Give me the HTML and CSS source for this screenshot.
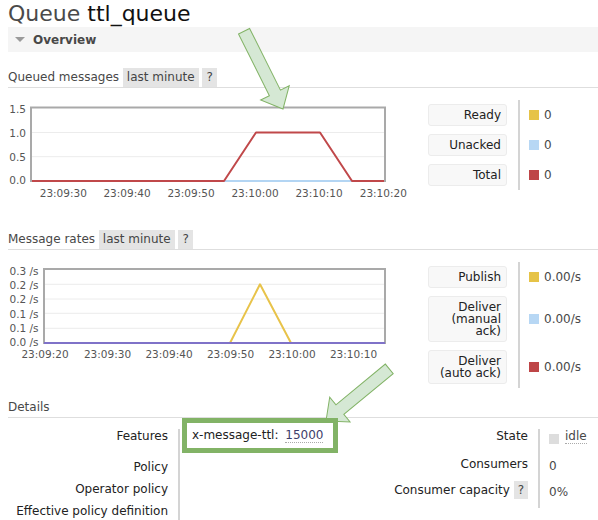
FILE: index.html
```html
<!DOCTYPE html>
<html>
<head>
<meta charset="utf-8">
<title>Queue ttl_queue</title>
<link rel="stylesheet" href="styles.css">
</head>
<body>
<h1 class="title"><span class="title-kind">Queue</span> <span class="title-name">ttl_queue</span></h1>

<div class="section-head"><span class="tri"></span><span class="section-label">Overview</span></div>

<h3 class="sub">Queued messages <span class="pill">last minute</span> <span class="pill">?</span></h3>
<div class="chart-row chart-row-1">
  <svg class="chart" width="412" height="100" viewBox="0 0 412 100">
    <line x1="24" y1="32.5" x2="376" y2="32.5" stroke="#ececec" stroke-width="1"/>
    <line x1="24" y1="56.7" x2="376" y2="56.7" stroke="#ececec" stroke-width="1"/>
    <rect x="23" y="7.5" width="354" height="73.5" fill="none" stroke="#a9a9a9" stroke-width="2"/>
    <polyline points="216,81 344,81" fill="none" stroke="#b3d5f3" stroke-width="2"/>
    <polyline points="24,81 216,81 248,32.5 312,32.5 344,81 376,81" fill="none" stroke="#c0484a" stroke-width="2" stroke-linejoin="round"/>
    <g class="ax" text-anchor="end">
      <text x="18" y="12.8">1.5</text>
      <text x="18" y="36.5">1.0</text>
      <text x="18" y="60.5">0.5</text>
      <text x="18" y="84.3">0.0</text>
    </g>
    <g class="ax" text-anchor="middle">
      <text x="55.3" y="96.5">23:09:30</text>
      <text x="119" y="96.5">23:09:40</text>
      <text x="183" y="96.5">23:09:50</text>
      <text x="247" y="96.5">23:10:00</text>
      <text x="311" y="96.5">23:10:10</text>
      <text x="375.3" y="96.5">23:10:20</text>
    </g>
  </svg>
  <div class="legend">
    <div class="lg-label"><span class="lg-box">Ready</span></div>
    <div class="lg-value"><span class="sw sw-yellow"></span>0</div>
    <div class="lg-label"><span class="lg-box">Unacked</span></div>
    <div class="lg-value"><span class="sw sw-blue"></span>0</div>
    <div class="lg-label"><span class="lg-box">Total</span></div>
    <div class="lg-value"><span class="sw sw-red"></span>0</div>
  </div>
</div>

<h3 class="sub">Message rates <span class="pill">last minute</span> <span class="pill">?</span></h3>
<div class="chart-row chart-row-2">
  <svg class="chart" width="412" height="100" viewBox="0 0 412 100">
    <line x1="37" y1="22.3" x2="376" y2="22.3" stroke="#ececec" stroke-width="1"/>
    <line x1="37" y1="37" x2="376" y2="37" stroke="#ececec" stroke-width="1"/>
    <line x1="37" y1="51.3" x2="376" y2="51.3" stroke="#ececec" stroke-width="1"/>
    <line x1="37" y1="66.3" x2="376" y2="66.3" stroke="#ececec" stroke-width="1"/>
    <rect x="36" y="7" width="341" height="74" fill="none" stroke="#a9a9a9" stroke-width="2"/>
    <polyline points="222,81 252,22.3 283,81" fill="none" stroke="#e8c34a" stroke-width="2" stroke-linejoin="round"/>
    <polyline points="36,81 377,81" fill="none" stroke="#7f72c8" stroke-width="2"/>
    <g class="ax" text-anchor="end">
      <text x="30.5" y="12.5">0.3 /s</text>
      <text x="30.5" y="26.8">0.2 /s</text>
      <text x="30.5" y="40.8">0.2 /s</text>
      <text x="30.5" y="55.6">0.1 /s</text>
      <text x="30.5" y="69.6">0.1 /s</text>
      <text x="30.5" y="84.2">0.0 /s</text>
    </g>
    <g class="ax" text-anchor="middle">
      <text x="37" y="96">23:09:20</text>
      <text x="99.5" y="96">23:09:30</text>
      <text x="161" y="96">23:09:40</text>
      <text x="222.5" y="96">23:09:50</text>
      <text x="284" y="96">23:10:00</text>
      <text x="345.5" y="96">23:10:10</text>
    </g>
  </svg>
  <div class="legend">
    <div class="lg-label"><span class="lg-box">Publish</span></div>
    <div class="lg-value"><span class="sw sw-yellow"></span>0.00/s</div>
    <div class="lg-label"><span class="lg-box">Deliver (manual ack)</span></div>
    <div class="lg-value"><span class="sw sw-blue"></span>0.00/s</div>
    <div class="lg-label"><span class="lg-box">Deliver (auto ack)</span></div>
    <div class="lg-value"><span class="sw sw-red"></span>0.00/s</div>
  </div>
</div>

<h3 class="sub">Details</h3>
<div class="details">
  <div class="facts facts-left">
    <div class="f-label">Features</div>
    <div class="f-value f-value-feat"><span class="feat-box">x-message-ttl: <span class="dotted num">15000</span></span></div>
    <div class="f-label">Policy</div>
    <div class="f-value"></div>
    <div class="f-label">Operator policy</div>
    <div class="f-value"></div>
    <div class="f-label">Effective policy definition</div>
    <div class="f-value"></div>
  </div>
  <div class="facts facts-right">
    <div class="f-label">State</div>
    <div class="f-value r-value"><span class="state-sq"></span><span class="dotted">idle</span></div>
    <div class="f-label">Consumers</div>
    <div class="f-value r-value r-low">0</div>
    <div class="f-label">Consumer capacity <span class="pill pill-sm">?</span></div>
    <div class="f-value r-value r-low">0%</div>
  </div>
</div>

<svg class="annot" width="598" height="520" viewBox="0 0 598 520">
  <polygon transform="translate(283,109) rotate(63.4)" points="0,0 -18,-16 -18,-6.2 -87,-6.2 -87,6.2 -18,6.2 -18,16" fill="#d5e8d4" stroke="#82b366" stroke-width="1" stroke-linejoin="miter"/>
  <polygon transform="translate(326,421) rotate(140.5)" points="0,0 -18,-16 -18,-6.2 -82,-6.2 -82,6.2 -18,6.2 -18,16" fill="#d5e8d4" stroke="#82b366" stroke-width="1" stroke-linejoin="miter"/>
</svg>
</body>
</html>
```
FILE: styles.css
```css
* { box-sizing: border-box; }

html, body { margin: 0; }

body {
  position: relative;
  width: 598px;
  height: 520px;
  overflow: hidden;
  padding-left: 8px;
  font-family: "DejaVu Sans", Verdana, sans-serif;
  font-size: 12px;
  line-height: 14px;
  color: #222;
  background: #fff;
}

.title {
  margin: 0;
  height: 27px;
  font-size: 22px;
  line-height: 27px;
  font-weight: normal;
  white-space: nowrap;
}
.title-kind { color: #4a4a4a; }
.title-name { color: #111; }

.section-head {
  height: 25px;
  background: #f5f5f5;
  display: flex;
  align-items: center;
  padding-left: 7px;
  margin-bottom: 16px;
}
.tri {
  width: 0;
  height: 0;
  border-left: 5px solid transparent;
  border-right: 5px solid transparent;
  border-top: 5px solid #9a9a9a;
  margin-right: 8px;
}
.section-label { font-weight: bold; color: #484848; }

.sub {
  margin: 0;
  height: 20px;
  font-size: 12px;
  font-weight: normal;
  line-height: 19px;
  border-bottom: 1px solid #dedede;
  color: #484848;
  white-space: nowrap;
}

.pill {
  display: inline-block;
  background: #e4e4e4;
  padding: 0 4px;
  line-height: 19px;
  color: #444;
}
.pill-sm {
  line-height: 14px;
  padding: 2px 4px;
  margin: -2px 0;
}

.chart-row {
  display: flex;
  align-items: flex-start;
  padding-top: 12px;
}
.chart-row-1 { margin-bottom: 30px; }
.chart-row-2 { margin-bottom: 10px; }

.chart { display: block; flex: none; }
.ax text {
  font-family: "DejaVu Sans", Verdana, sans-serif;
  font-size: 10.5px;
  fill: #555;
}

.legend {
  margin-left: 8px;
  display: grid;
  grid-template-columns: 90px auto;
}
.lg-label { padding: 4px 11px 4px 0; }
.lg-box {
  display: block;
  width: 79px;
  background: #f8f8f8;
  border: 1px solid #ececec;
  border-radius: 3px;
  padding: 4px 5px;
  text-align: right;
  line-height: 12px;
  color: #222;
}
.lg-value {
  border-left: 2px solid #d4d4d4;
  padding-left: 9px;
  display: flex;
  align-items: center;
  color: #484848;
  white-space: nowrap;
}
.sw { width: 10px; height: 10px; margin-right: 5px; flex: none; }
.sw-yellow { background: #e6c347; }
.sw-blue { background: #b7d7f4; }
.sw-red { background: #be4547; }

.details {
  display: flex;
  margin-top: 11px;
}
.facts { display: grid; }
.facts-left {
  grid-template-columns: 170px 200px;
  grid-template-rows: 31px 22px 22px 22px;
}
.facts-right {
  margin-left: auto;
  grid-template-columns: auto 60px;
  grid-template-rows: 28px 26px 25px;
}
.f-label {
  text-align: right;
  padding-right: 10px;
  white-space: nowrap;
  color: #222;
}
.f-value {
  border-left: 2px solid #d4d4d4;
  color: #484848;
}
.f-value-feat {
  display: flex;
  align-items: flex-start;
  padding-left: 2px;
}
.feat-box {
  position: relative;
  z-index: 2;
  display: block;
  margin-top: -11px;
  height: 35px;
  border: 5px solid #82b366;
  background: #fff;
  padding: 0 10px 0 5px;
  line-height: 25px;
  color: #222;
  white-space: nowrap;
}
.dotted { border-bottom: 1px dotted #aaa; line-height: 14px; display: inline-block; }
.num { margin-left: 3px; color: #3d3d6a; }

.r-value {
  padding-left: 9px;
  display: flex;
  align-items: flex-start;
  white-space: nowrap;
}
.r-low { padding-top: 2px; }
.state-sq {
  width: 10px;
  height: 10px;
  background: #ddd;
  margin: 5px 6px 0 0;
  flex: none;
}

.annot {
  position: absolute;
  left: 0;
  top: 0;
  z-index: 1;
  pointer-events: none;
}
```
